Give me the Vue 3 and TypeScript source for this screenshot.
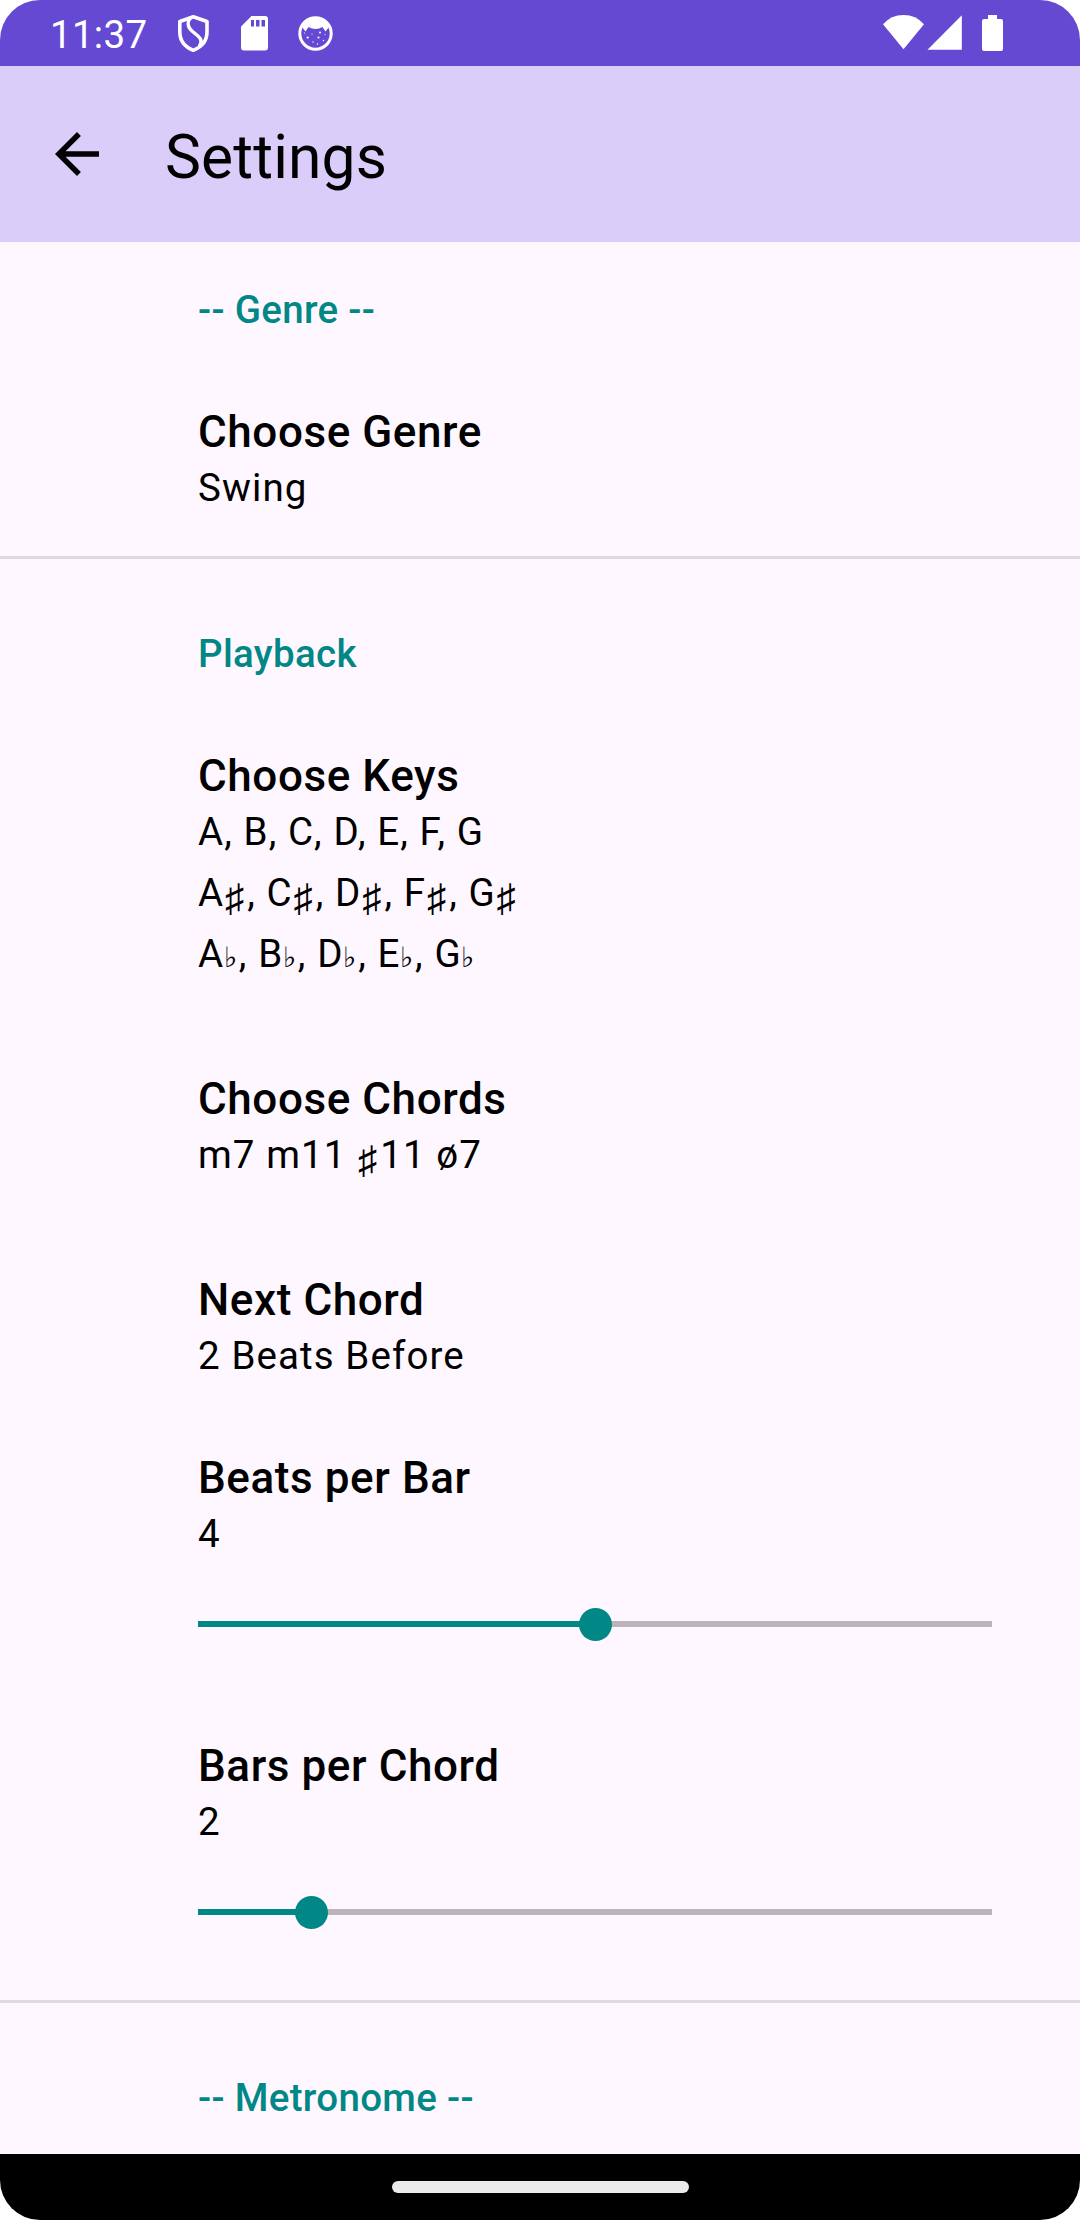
<script setup lang="ts">
interface Preference {
  title: string
  summary: string[]
  slider?: number
  gap: number
}

interface Section {
  heading: string
  items: Preference[]
}

const sections: Section[] = [
  {
    heading: '-- Genre --',
    items: [{ title: 'Choose Genre', summary: ['Swing'], gap: 73 }],
  },
  {
    heading: 'Playback',
    items: [
      {
        title: 'Choose Keys',
        summary: ['A, B, C, D, E, F, G', 'A♯, C♯, D♯, F♯, G♯', 'A♭, B♭, D♭, E♭, G♭'],
        gap: 73,
      },
      { title: 'Choose Chords', summary: ['m7 m11 ♯11 ø7'], gap: 88 },
      { title: 'Next Chord', summary: ['2 Beats Before'], gap: 88 },
      { title: 'Beats per Bar', summary: ['4'], slider: 0.5, gap: 65 },
      { title: 'Bars per Chord', summary: ['2'], slider: 1 / 7, gap: 99 },
    ],
  },
  { heading: '-- Metronome --', items: [] },
]

// Accidentals have their own size and baseline, so each line is split around them.
const split = (line: string): string[] => line.split(/([♯♭])/).filter((p) => p !== '')
const kind = (part: string): string => (part === '♯' ? 'sharp' : part === '♭' ? 'flat' : '')
</script>

<template>
  <div class="screen">
    <header class="status">
      <span class="clock">11:37</span>
      <svg class="notif" width="160" height="66" viewBox="174 0 160 66" fill="none">
        <path d="M193.300 16.800 L179.800 21.500 V32 C179.800 40.500 185 47 193.300 50.300 C201.500 47 207 40.500 207 32 V21.500 Z" stroke="#fff" stroke-width="3.600" stroke-linejoin="round" />
        <path d="M190.500 18 C187 22 187.500 27 192 31 L198 36 C202 39.500 202 43 199 46.500" stroke="#fff" stroke-width="3.400" />
        <path fill="#fff" fill-rule="evenodd" d="M251.500 16 H265 Q268 16 268 19 V47.500 Q268 50.500 265 50.500 H244 Q241 50.500 241 47.500 V26.500 Z M251 20 V26.500 H254 V20 Z M256 20 V26.500 H259.500 V20 Z M261.500 20 V26.500 H265 V20 Z" />
        <circle cx="315.500" cy="33.500" r="15.700" stroke="#fff" stroke-width="3" />
        <path fill="#fff" d="M302 27 Q306 18.500 315.500 18 Q325 18.500 329 27 L325.500 31.500 L322.500 27 Q315.500 31 308.500 27 L305.500 31.500 Z" />
        <g fill="#fff">
          <circle cx="307.700" cy="37.500" r="1.100" /><circle cx="320" cy="32.500" r="1" /><circle cx="318.500" cy="37.500" r="1" />
          <circle cx="312" cy="34" r=".6" /><circle cx="313" cy="42" r=".7" /><circle cx="323.500" cy="40.500" r=".7" />
          <circle cx="325" cy="34.500" r=".6" /><circle cx="304.500" cy="33" r=".6" /><circle cx="317.500" cy="44" r=".7" />
        </g>
      </svg>
      <svg class="system" width="130" height="66" viewBox="880 0 130 66" fill="#fff">
        <path d="M883 24.300 Q891 15 903.500 15 Q916 15 924 24.300 L903.500 49.300 Z" />
        <path d="M961.800 15.300 V49.800 H927.500 Z" />
        <path d="M988 15 H997 V19 H1001 Q1003 19 1003 21 V49 Q1003 51 1001 51 H984 Q982 51 982 49 V21 Q982 19 984 19 H988 Z" />
      </svg>
    </header>

    <nav class="appbar">
      <svg width="66" height="66" viewBox="0 0 24 24">
        <path d="M20 11H7.830l5.590-5.590L12 4l-8 8 8 8 1.410-1.410L7.830 13H20v-2z" />
      </svg>
      <h1>Settings</h1>
    </nav>

    <main>
      <section v-for="section in sections" :key="section.heading">
        <h2>{{ section.heading }}</h2>
        <div
          v-for="item in section.items"
          :key="item.title"
          class="item"
          :style="{ marginTop: item.gap + 'px' }"
        >
          <h3>{{ item.title }}</h3>
          <p v-for="line in item.summary" :key="line"><span v-for="(part, i) in split(line)" :key="i" :class="kind(part)">{{ part }}</span></p>
          <div v-if="item.slider !== undefined" class="slider">
            <div class="fill" :style="{ width: item.slider * 100 + '%' }"><i class="thumb"></i></div>
          </div>
        </div>
      </section>
    </main>

    <footer class="gesture"><span></span></footer>
  </div>
</template>

<style>
body {
  margin: 0;
  background: #fff;
}
</style>

<style scoped>
.screen {
  display: flex;
  flex-direction: column;
  width: 1080px;
  height: 2220px;
  overflow: hidden;
  border-radius: 40px;
  background: #fef7ff;
  color: #000;
  font-family: Roboto, sans-serif;
}

h1, h2, h3, p {
  margin: 0;
  white-space: pre;
}

.status {
  display: flex;
  flex: none;
  height: 66px;
  background: #6549d2;
  color: #fff;
}

.clock {
  width: 124px;
  padding-left: 50px;
  font-size: 38.5px;
  line-height: 70px;
  letter-spacing: 0.3px;
}

.notif, .system {
  flex: none;
}

.system {
  margin: 0 70px 0 auto;
}

.appbar {
  display: flex;
  flex: none;
  align-items: center;
  box-sizing: border-box;
  height: 176px;
  padding-left: 44px;
  background: #dacdf9;
}

.appbar h1 {
  margin-left: 55px;
  padding-top: 6px;
  font-size: 60.5px;
  font-weight: 400;
  letter-spacing: 0.15px;
}

main {
  flex: 1;
  min-height: 0;
  overflow: hidden;
}

section {
  padding: 72px 88px 0 198px;
}

section:first-child {
  padding-top: 45px;
  padding-bottom: 37px;
}

section:nth-child(2) {
  padding-bottom: 71px;
}

section + section {
  border-top: 3px solid #dfd9e0;
}

h2 {
  color: #018786;
  font-size: 38.5px;
  font-weight: 500;
  line-height: 46px;
  letter-spacing: 0.32px;
}

.item {
  display: flow-root;
  padding-bottom: 1px;
}

h3 {
  height: 51px;
  font-size: 44px;
  font-weight: 500;
  line-height: 52px;
  letter-spacing: 0.58px;
}

p {
  height: 61px;
  font-size: 38.5px;
  line-height: 61px;
  letter-spacing: 1.1px;
}

.sharp, .flat {
  display: inline-block;
  line-height: 1;
  letter-spacing: 0;
}

.sharp {
  width: 22.5px;
  padding-left: 0.5px;
  vertical-align: -5px;
}

.flat {
  width: 15px;
  margin-left: -0.4px;
  font-size: 28px;
}

.slider {
  height: 6px;
  margin: 57px 0 13px;
  background: #bbb5bb;
}

.fill {
  position: relative;
  height: 6px;
  background: #018786;
}

.thumb {
  position: absolute;
  top: -13.5px;
  right: -16.5px;
  width: 33px;
  height: 33px;
  border-radius: 50%;
  background: #018786;
}

.gesture {
  display: flex;
  flex: none;
  align-items: center;
  justify-content: center;
  height: 66px;
  background: #000;
}

.gesture span {
  width: 297px;
  height: 12px;
  border-radius: 6px;
  background: #ebebeb;
}
</style>
